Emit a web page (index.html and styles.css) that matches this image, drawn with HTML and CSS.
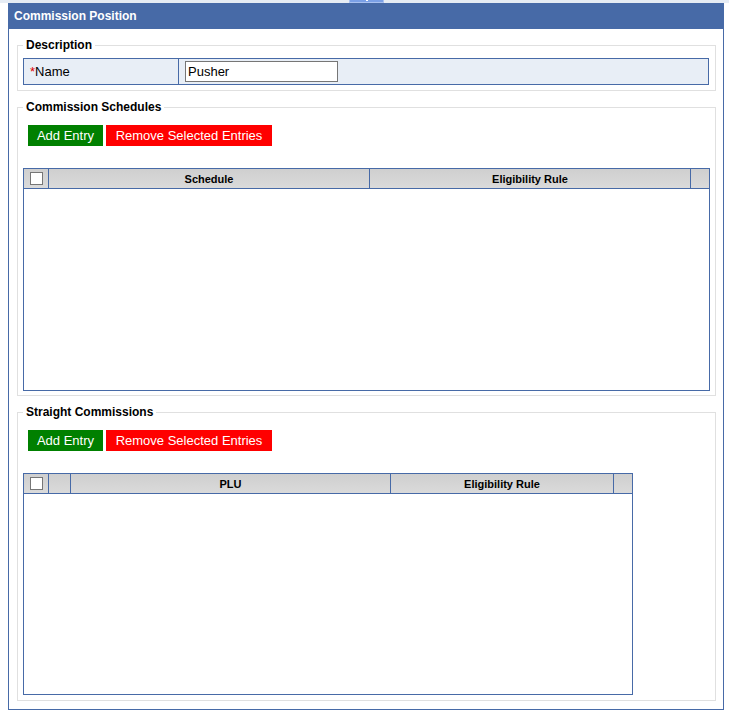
FILE: index.html
```html
<!DOCTYPE html>
<html lang="en">
<head>
      <meta charset="UTF-8">
      <meta name="viewport" content="width=device-width, initial-scale=1.0">
      <title>Commission Position</title>
      <link rel="stylesheet" href="styles.css">
</head>
<body>
      <div class="topbar">
            <div class="topbar-tab"></div>
      </div>
      <div class="panel">
            <div class="panel-title">Commission Position</div>
            <div class="panel-body">
                  <fieldset class="group group-desc">
                        <legend>Description</legend>
                        <div class="name-row">
                              <div class="name-label"><span class="req">*</span>Name</div>
                              <div class="name-field"><input type="text" value="Pusher"></div>
                        </div>
                  </fieldset>

                  <fieldset class="group">
                        <legend>Commission Schedules</legend>
                        <div class="toolbar">
                              <button class="btn btn-add">Add Entry</button>
                              <button class="btn btn-remove">Remove Selected Entries</button>
                        </div>
                        <div class="grid grid-wide">
                              <div class="grid-head cols-schedule">
                                    <div><input type="checkbox" class="check"></div>
                                    <div>Schedule</div>
                                    <div>Eligibility Rule</div>
                                    <div></div>
                              </div>
                        </div>
                  </fieldset>

                  <fieldset class="group group-last">
                        <legend>Straight Commissions</legend>
                        <div class="toolbar">
                              <button class="btn btn-add">Add Entry</button>
                              <button class="btn btn-remove">Remove Selected Entries</button>
                        </div>
                        <div class="grid grid-narrow">
                              <div class="grid-head cols-plu">
                                    <div><input type="checkbox" class="check"></div>
                                    <div></div>
                                    <div>PLU</div>
                                    <div>Eligibility Rule</div>
                                    <div></div>
                              </div>
                        </div>
                  </fieldset>
            </div>
      </div>
</body>
</html>
```

FILE: styles.css
```css
* {
      box-sizing: border-box;
}

body {
      margin: 0;
      font-family: "Liberation Sans", Arial, sans-serif;
      font-size: 13px;
      color: #000;
      background: #fff;
}

.topbar {
      height: 3px;
      background: #e6ecf4;
      display: flex;
      justify-content: center;
      padding: 0 5px 0 8px;
}
.topbar-tab {
      width: 35px;
      height: 3px;
      background: #7ba0e6;
      border: 1px solid #a9c1f0;
      border-top: 0;
      position: relative;
}
.topbar-tab::after {
      content: "";
      position: absolute;
      left: 16px;
      top: 0;
      width: 2px;
      height: 1px;
      background: #fff;
}

.panel {
      margin: 0 5px 0 8px;
      border: 1px solid #476aa7;
      border-top: 0;
}
.panel-title {
      height: 26px;
      line-height: 26px;
      background: #476aa7;
      color: #fff;
      font-weight: bold;
      font-size: 12px;
      padding-left: 5px;
}
.panel-body {
      padding: 0 7px 8px 8px;
}

.group {
      margin: 9px 0 0;
      padding: 0 6px 4px 5px;
      border: 1px solid #e0e0e0;
      min-width: 0;
}
.group legend {
      font-weight: bold;
      font-size: 12px;
      line-height: 14px;
      padding: 0 3px;
}
.group-desc {
      padding-top: 6px;
      padding-bottom: 5px;
}
.group-last {
      padding-bottom: 5px;
}

/* name row */
.name-row {
      display: grid;
      grid-template-columns: 155px 1fr;
      height: 27px;
      border: 1px solid #476aa7;
      background: #e8eef6;
}
.name-label {
      border-right: 1px solid #476aa7;
      padding-left: 6px;
      display: flex;
      align-items: center;
}
.req {
      color: #e00000;
}
.name-field {
      padding-left: 6px;
      display: flex;
      align-items: center;
}
.name-field input {
      width: 153px;
      height: 21px;
      border: 1px solid #767676;
      padding: 0 2px;
      font-family: "Liberation Sans", Arial, sans-serif;
      font-size: 13px;
      background: #fff;
      margin: 0;
}

/* buttons */
.toolbar {
      display: flex;
      gap: 3px;
      margin: 11px 0 22px 5px;
}
.btn {
      appearance: none;
      border: none;
      height: 21px;
      margin: 0;
      padding: 0;
      text-align: center;
      color: #fff;
      font-family: "Liberation Sans", Arial, sans-serif;
      font-size: 13px;
      cursor: pointer;
}
.btn-add {
      background: #008000;
      width: 75px;
}
.btn-remove {
      background: #ff0000;
      width: 166px;
}

/* grids */
.grid {
      border: 1px solid #476aa7;
      background: #fff;
}
.grid-wide {
      width: 687px;
      height: 223px;
}
.grid-narrow {
      width: 610px;
      height: 222px;
}
.grid-head {
      display: grid;
      height: 20px;
      border-bottom: 1px solid #476aa7;
      background: linear-gradient(#cfcfcf, #dadada);
}
.cols-schedule {
      grid-template-columns: 25px 321px 321px 1fr;
}
.cols-plu {
      grid-template-columns: 25px 22px 320px 223px 1fr;
}
.grid-head > div {
      border-right: 1px solid #476aa7;
      display: flex;
      align-items: center;
      justify-content: center;
      font-weight: bold;
      font-size: 11px;
}
.grid-head > div:last-child {
      border-right: none;
}
.check {
      appearance: none;
      width: 13px;
      height: 13px;
      margin: 0;
      border: 1px solid #767676;
      background: #fff;
}
```
